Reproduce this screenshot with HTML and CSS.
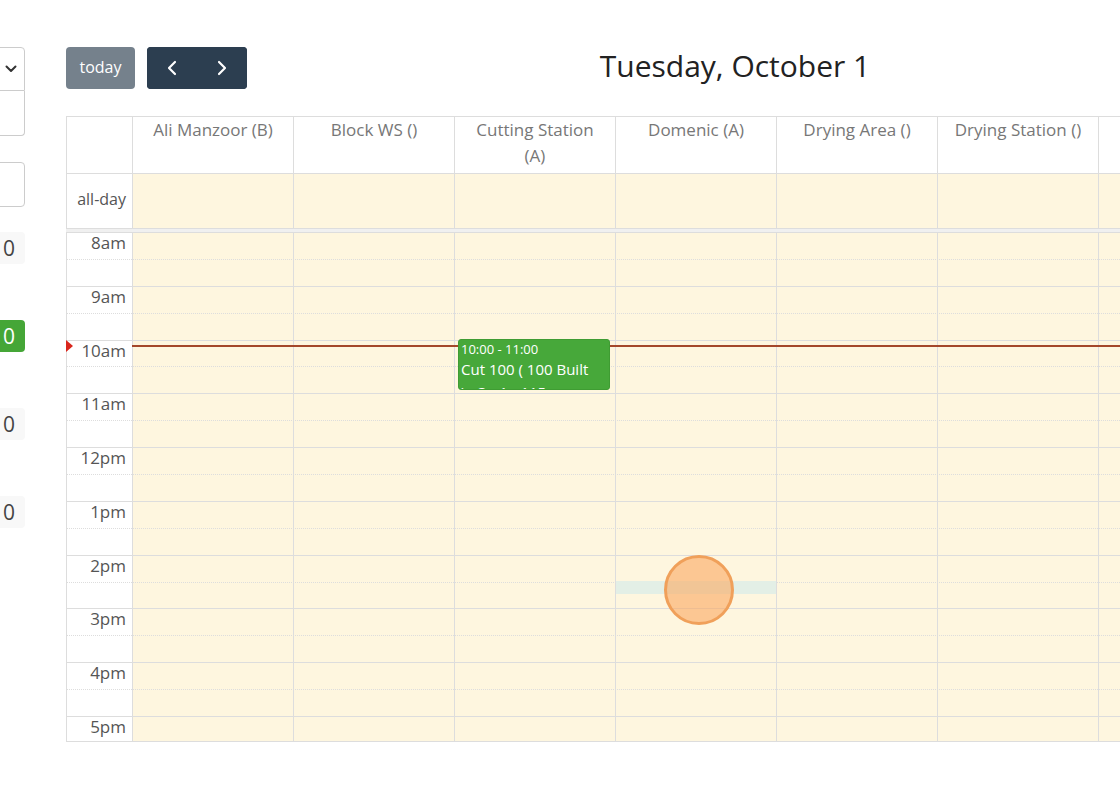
FILE: index.html
```html
<!DOCTYPE html>
<html lang="en">
<head>
  <meta charset="UTF-8" />
  <title>Resource Schedule</title>
  <link rel="stylesheet" href="styles.css">
</head>
<body>
  <aside class="sidebar">
    <div class="field field-select">
      <svg class="chev" width="12" height="8" viewBox="0 0 12 8"><polyline points="1.5,1.5 6,6 10.5,1.5" fill="none" stroke="#333" stroke-width="2" stroke-linecap="round" stroke-linejoin="round"/></svg>
    </div>
    <div class="field"></div>
    <div class="field field-gap"></div>

    <div class="counts">
      <span class="count">0</span>
      <span class="count count-active">0</span>
      <span class="count">0</span>
      <span class="count">0</span>
    </div>
  </aside>

  <main class="calendar">
    <div class="toolbar">
      <div class="toolbar-left">
        <button class="btn btn-today">today</button>
        <div class="btn-group">
          <button class="btn btn-nav" aria-label="prev">
            <svg width="10" height="16" viewBox="0 0 10 16"><polyline points="8,2 2,8 8,14" fill="none" stroke="#fff" stroke-width="2.2" stroke-linecap="round" stroke-linejoin="round"/></svg>
          </button>
          <button class="btn btn-nav" aria-label="next">
            <svg width="10" height="16" viewBox="0 0 10 16"><polyline points="2,2 8,8 2,14" fill="none" stroke="#fff" stroke-width="2.2" stroke-linecap="round" stroke-linejoin="round"/></svg>
          </button>
        </div>
      </div>
      <h2 class="title">Tuesday, October 1</h2>
      <div></div>
    </div>

    <div class="grid">
      <div class="row row-head">
        <div class="cell axis"></div>
        <div class="cell head">Ali Manzoor (B)</div>
        <div class="cell head">Block WS ()</div>
        <div class="cell head">Cutting Station (A)</div>
        <div class="cell head">Domenic (A)</div>
        <div class="cell head">Drying Area ()</div>
        <div class="cell head">Drying Station ()</div>
        <div class="cell head">Glue ()</div>
        <div class="cell head">Kiln ()</div>
      </div>

      <div class="row row-allday">
        <div class="cell axis allday-label">all-day</div>
        <div class="cell lane"></div>
        <div class="cell lane"></div>
        <div class="cell lane"></div>
        <div class="cell lane"></div>
        <div class="cell lane"></div>
        <div class="cell lane"></div>
        <div class="cell lane"></div>
        <div class="cell lane"></div>
      </div>

      <div class="divider"></div>

      <div class="timegrid">
        <div class="layer cols">
          <div class="cell axis"></div>
          <div class="cell lane"></div>
          <div class="cell lane"></div>
          <div class="cell lane"></div>
          <div class="cell lane"></div>
          <div class="cell lane"></div>
          <div class="cell lane"></div>
          <div class="cell lane"></div>
          <div class="cell lane"></div>
        </div>

        <div class="layer slats">
          <div class="slot hour"><span class="slot-label">8am</span></div>
          <div class="slot"></div>
          <div class="slot hour"><span class="slot-label">9am</span></div>
          <div class="slot"></div>
          <div class="slot hour"><span class="slot-label">10am</span></div>
          <div class="slot"></div>
          <div class="slot hour"><span class="slot-label">11am</span></div>
          <div class="slot"></div>
          <div class="slot hour"><span class="slot-label">12pm</span></div>
          <div class="slot"></div>
          <div class="slot hour"><span class="slot-label">1pm</span></div>
          <div class="slot"></div>
          <div class="slot hour"><span class="slot-label">2pm</span></div>
          <div class="slot"></div>
          <div class="slot hour"><span class="slot-label">3pm</span></div>
          <div class="slot"></div>
          <div class="slot hour"><span class="slot-label">4pm</span></div>
          <div class="slot"></div>
          <div class="slot hour"><span class="slot-label">5pm</span></div>
          <div class="slot"></div>
        </div>

        <div class="layer content">
          <div class="now-arrow"></div>
          <div class="now-line"></div>
          <div class="col-content col-3">
            <div class="event">
              <div class="event-time">10:00 - 11:00</div>
              <div class="event-title">Cut 100 ( 100 Built ) - 3 - 1 - 115</div>
            </div>
          </div>
          <div class="col-content col-4">
            <div class="select-hl"></div>
            <div class="cursor-dot"></div>
          </div>
        </div>
      </div>
    </div>
  </main>
</body>
</html>
```

FILE: styles.css
```css
body {
  margin: 0;
  font-family: 'Open Sans', Lato, sans-serif;
  background: #fff;
  color: #333;
  display: flex;
  align-items: flex-start;
  overflow: hidden;
  height: 804px;
}

/* left filter panel, mostly off screen */
.sidebar {
  flex: 0 0 200px;
  margin-left: -175px;
  padding-top: 47px;
}

.field {
  box-sizing: border-box;
  height: 45px;
  border: 1px solid #ccc;
  border-radius: 4px;
  background: #fff;
}

.field-select {
  height: 44px;
  display: flex;
  justify-content: flex-end;
  align-items: center;
  padding-right: 7px;
  border-radius: 4px 4px 0 0;
}

.field-select + .field {
  border-top: none;
  border-radius: 0 0 4px 4px;
}

.field-gap {
  margin-top: 26px;
}

.counts {
  margin-top: 25px;
  display: flex;
  flex-direction: column;
  align-items: flex-end;
  gap: 56px;
}

.count {
  height: 32px;
  line-height: 32px;
  padding: 0 10px;
  font-size: 21px;
  color: #444;
  background: #f8f8f8;
  border-radius: 4px;
}

.count-active {
  background: #45a637;
  color: #fff;
}

/* calendar */
.calendar {
  flex: 0 0 1338px;
  min-width: 0;
  margin-left: 41px;
  padding-top: 47px;
}

.toolbar {
  display: grid;
  grid-template-columns: 1fr auto 1fr;
  align-items: start;
  height: 42px;
  margin-bottom: 27px;
}

.toolbar-left {
  display: flex;
  gap: 12px;
}

.title {
  margin: 0;
  font-size: 30px;
  line-height: 38px;
  font-weight: 400;
  color: #222;
}

.btn {
  height: 42px;
  border: none;
  border-radius: 4px;
  background: #2c3e50;
  color: #fff;
  font-family: inherit;
  font-size: 16px;
  padding: 0;
  cursor: pointer;
}

.btn-today {
  width: 69px;
  opacity: 0.65;
  padding-bottom: 3px;
}

.btn-group {
  display: flex;
  border-radius: 4px;
  overflow: hidden;
  background: #2c3e50;
}

.btn-nav {
  width: 50px;
  border-radius: 0;
  display: flex;
  align-items: center;
  justify-content: center;
}

.btn-nav svg {
  display: block;
}

.grid {
  width: 1354px;
}

.row,
.cols {
  display: grid;
  grid-template-columns: 66px repeat(8, 161px);
}

.row {
  box-sizing: border-box;
}

.cell {
  box-sizing: border-box;
  border-left: 1px solid #ddd;
}

.row-head {
  height: 57px;
  border-top: 1px solid #ddd;
}

.head {
  text-align: center;
  font-size: 17px;
  line-height: 26px;
  padding: 0 14px;
  color: #777;
}

.row-allday {
  height: 55px;
  border-top: 1px solid #ddd;
}

.allday-label {
  display: flex;
  align-items: center;
  justify-content: flex-end;
  padding: 0 6px 4px 0;
  font-size: 16px;
  color: #555;
}

.lane {
  background: #fef6df;
}

.divider {
  height: 3px;
  border-top: 1px solid #ddd;
  background: #f0f0f0;
}

.timegrid {
  display: grid;
  box-sizing: border-box;
  height: 510px;
  overflow: hidden;
  border-bottom: 1px solid #ddd;
}

.layer {
  grid-area: 1 / 1;
}

.cols {
  height: 100%;
}

.slot {
  box-sizing: border-box;
  height: 26.9px;
  border-top: 1px dotted #ddd;
  border-left: 1px solid #ddd;
}

.slot.hour {
  border-top: 1px solid #ddd;
}

.slot-label {
  display: block;
  width: 59px;
  text-align: right;
  font-size: 17px;
  line-height: 20px;
  color: #555;
}

.content {
  position: relative;
  display: grid;
  grid-template-columns: 66px repeat(8, 161px);
}

.col-content {
  position: relative;
}

.col-3 {
  grid-column: 4;
}

.col-4 {
  grid-column: 5;
}

.now-line {
  position: absolute;
  top: 113px;
  left: 66px;
  right: 0;
  height: 2px;
  background: #a4472a;
}

.now-arrow {
  position: absolute;
  top: 108px;
  left: 0;
  width: 0;
  height: 0;
  border-top: 6px solid transparent;
  border-bottom: 6px solid transparent;
  border-left: 7px solid #d9261c;
}

.event {
  position: absolute;
  z-index: 2;
  top: 107px;
  left: 4px;
  right: 5px;
  height: 51px;
  box-sizing: border-box;
  background: #47a83a;
  border: 1px solid #3f9c33;
  border-radius: 3px;
  color: #fff;
  padding: 0 14px 0 2px;
  overflow: hidden;
}

.event-time {
  font-size: 13px;
  line-height: 18px;
}

.event-title {
  font-size: 15px;
  line-height: 23px;
}

.select-hl {
  position: absolute;
  top: 349px;
  left: 1px;
  right: 0;
  height: 13px;
  background: #e3efe6;
}

.cursor-dot {
  position: absolute;
  top: 323px;
  left: 49px;
  width: 70px;
  height: 70px;
  box-sizing: border-box;
  border-radius: 50%;
  border: 3px solid #f0a05a;
  background: rgba(250, 168, 96, 0.6);
}
```
